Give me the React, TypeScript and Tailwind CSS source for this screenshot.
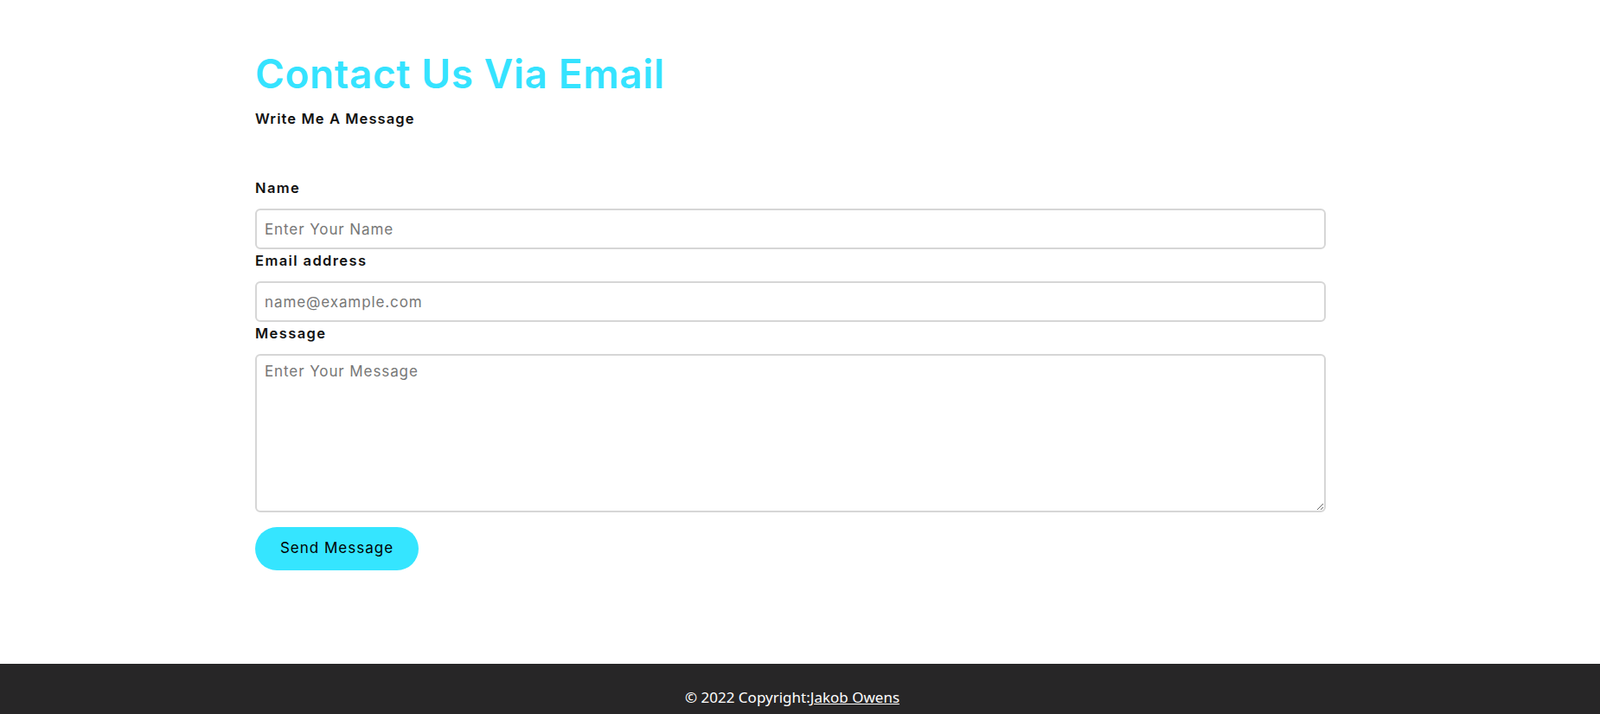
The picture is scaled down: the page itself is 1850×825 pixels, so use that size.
import React from "react";

const fieldClass =
  "block w-full h-[47px] rounded-[6px] border-2 border-[#d6d6d6] bg-white px-[9px] text-[17px] tracking-[0.9px] text-[#212529] placeholder:text-[#777777] outline-none";

const labelClass =
  "block text-[16.5px] leading-[27px] mb-[10px] font-semibold tracking-[1.4px] text-[#111111]";

export default function App() {
  return (
    <div className="min-h-screen bg-white font-['Inter','Noto_Sans',sans-serif]">
      {/* Contact form */}
      <section className="ml-[295px] w-[1238px] pt-[56px] pb-[108px]">
        <h1 className="text-[46px] leading-[58px] font-semibold text-[#35e3ff] tracking-[0.6px]">
          Contact Us Via Email
        </h1>
        <p className="mt-[10px] text-[16.5px] leading-[26px] font-semibold tracking-[1.1px] text-[#111111]">
          Write Me A Message
        </p>

        <form className="mt-[54px]" onSubmit={(e) => e.preventDefault()}>
          <label className={labelClass}>Name</label>
          <input type="text" placeholder="Enter Your Name" className={fieldClass} />

          <label className={labelClass}>Email address</label>
          <input
            type="email"
            placeholder="name@example.com"
            className={fieldClass}
          />

          <label className={labelClass}>Message</label>
          <textarea
            placeholder="Enter Your Message"
            className="block w-full h-[183px] rounded-[6px] border-2 border-[#d6d6d6] bg-white px-[9px] py-[6px] text-[17px] tracking-[0.9px] text-[#212529] placeholder:text-[#777777] outline-none"
          />

          <button
            type="submit"
            className="mt-[17px] w-[189px] h-[50px] rounded-full bg-[#35e5ff] text-[17px] tracking-[1px] text-black"
          >
            Send Message
          </button>
        </form>
      </section>

      {/* Footer */}
      <footer className="bg-[#272627] pr-[18px] py-[27px] text-center text-[17px] leading-[24px] text-white font-['Noto_Sans','Open_Sans',sans-serif]">
        © 2022 Copyright:
        <a href="#" className="underline text-white">
          Jakob Owens
        </a>
      </footer>
    </div>
  );
}
